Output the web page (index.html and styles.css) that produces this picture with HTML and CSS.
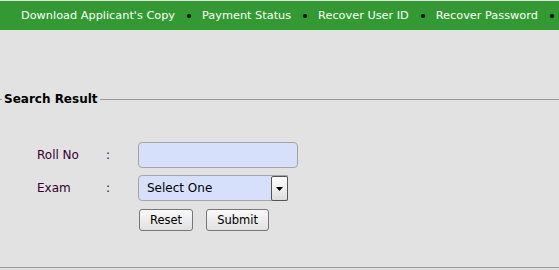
FILE: index.html
```html
<!DOCTYPE html>
<html lang="en">
<head>
    <meta charset="UTF-8">
    <meta name="viewport" content="width=device-width, initial-scale=1.0">
    <title>Search Result</title>
    <link rel="stylesheet" href="styles.css">
</head>
<body>
    <div class="topbar">
        <ul class="menu">
            <li><a href="#">Download Applicant's Copy</a></li>
            <li><a href="#">Payment Status</a></li>
            <li><a href="#">Recover User ID</a></li>
            <li><a href="#">Recover Password</a></li>
        </ul>
    </div>

    <fieldset class="result-box">
        <legend>Search Result</legend>
        <form class="search-form">
            <label for="rollno">Roll No</label>
            <span class="colon">:</span>
            <input type="text" id="rollno" class="roll-input">

            <label for="exam">Exam</label>
            <span class="colon">:</span>
            <div class="select-wrap">
                <select id="exam">
                    <option value="">Select One</option>
                </select>
                <span class="drop-btn"><svg width="7" height="4" viewBox="0 0 7 4"><path d="M0 0h7L3.5 4z" fill="#000"/></svg></span>
            </div>

            <span></span>
            <span></span>
            <div class="buttons">
                <button type="reset">Reset</button>
                <button type="button">Submit</button>
            </div>
        </form>
    </fieldset>
</body>
</html>
```

FILE: styles.css
```css
body {
    margin: 0;
    background: #e2e2e2;
    font-family: "DejaVu Sans", Verdana, sans-serif;
    font-size: 12px;
    color: #330033;
}
.topbar {
    margin-top: 1px;
    height: 29px;
    background: #339933;
}
.menu {
    list-style: none;
    margin: 0;
    padding: 0 0 0 21px;
    display: flex;
    height: 29px;
    align-items: center;
    white-space: nowrap;
    font-size: 11.3px;
}
.menu li {
    display: flex;
    align-items: center;
}
.menu li::after {
    content: "";
    width: 4px;
    height: 4px;
    border-radius: 50%;
    background: #000;
    margin: 1px 11px 0 12px;
}
.menu a {
    color: #fff;
    text-decoration: none;
}
.result-box {
    margin: 62px 0 0 0;
    padding: 36px 0 36px 2px;
    border: none;
    border-top: 1px solid #999;
    border-bottom: 1px solid #999;
    box-shadow: 0 1px 0 #d4d4d4;
}
.result-box legend {
    padding: 0 2px;
    font-weight: bold;
    font-size: 12px;
    color: #000;
}
.search-form {
    display: grid;
    grid-template-columns: 67px 34px auto;
    row-gap: 7px;
    align-items: center;
    padding-left: 35px;
}
.colon {
    padding-left: 2px;
}
.roll-input {
    box-sizing: border-box;
    width: 160px;
    height: 26px;
    border: 1px solid #a5a5a5;
    border-radius: 4px;
    background: #d6e0fa;
    margin: 0;
}
.select-wrap {
    position: relative;
    width: 150px;
    height: 26px;
}
.select-wrap select {
    appearance: none;
    box-sizing: border-box;
    width: 150px;
    height: 26px;
    margin: 0;
    padding: 0 0 0 8px;
    border: 1px solid #a5a5a5;
    border-radius: 4px 0 0 4px;
    background: #d6e0fa;
    font-family: inherit;
    font-size: 12px;
    color: #000;
}
.drop-btn {
    position: absolute;
    top: 1px;
    right: 0;
    width: 15px;
    height: 23px;
    border: 1px solid #555;
    border-radius: 2px;
    background: linear-gradient(#fff, #ddd);
    display: flex;
    align-items: center;
    justify-content: center;
}
.buttons {
    display: flex;
    gap: 13px;
    padding: 1px 0 0 1px;
}
.buttons button {
    height: 22px;
    padding: 0 10px;
    border: 1px solid #777;
    border-radius: 3px;
    background: linear-gradient(#fafafa, #e0e0e0);
    font-family: inherit;
    font-size: 11.5px;
    color: #000;
}
```
